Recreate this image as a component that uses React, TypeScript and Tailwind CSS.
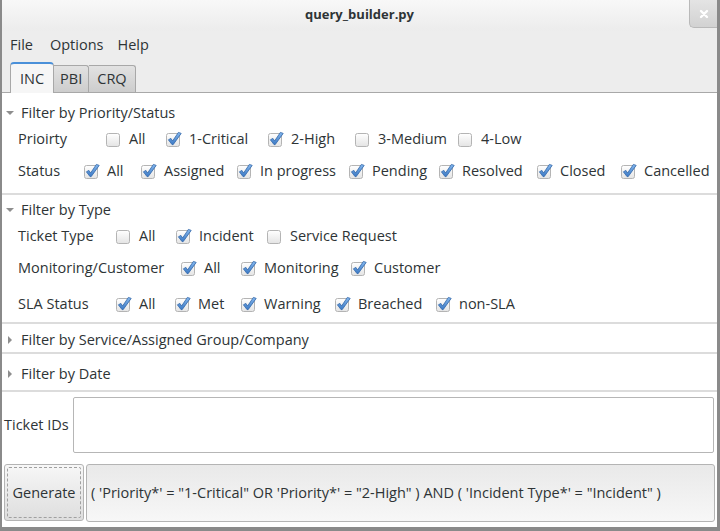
import React from 'react'

type Opt = { label: string; checked: boolean; w: string }

const font = { fontFamily: '"Open Sans", "DejaVu Sans", sans-serif' }

function CheckBox({ checked }: { checked: boolean }) {
  return (
    <svg width="17" height="16" viewBox="0 0 17 16" className="shrink-0">
      <defs>
        <linearGradient id="cbg" x1="0" y1="0" x2="0" y2="1">
          <stop offset="0" stopColor="#ffffff" />
          <stop offset="1" stopColor="#e4e4e4" />
        </linearGradient>
        <linearGradient id="chk" x1="0" y1="0" x2="0" y2="1">
          <stop offset="0" stopColor="#86b8ee" />
          <stop offset="1" stopColor="#3b79c4" />
        </linearGradient>
      </defs>
      <rect x="0.5" y="2.5" width="13" height="13" rx="2" fill="url(#cbg)" stroke="#b4b4b4" />
      {checked && (
        <path
          d="M2.4 8.8 L4.9 7.4 L6.6 10 L12.4 1.4 L15.2 2.4 L7.2 13.6 L6 13.6 Z"
          fill="url(#chk)"
          stroke="#2f64a8"
          strokeWidth="0.8"
          strokeLinejoin="round"
        />
      )}
    </svg>
  )
}

function Option({ o }: { o: Opt }) {
  return (
    <div className={`flex items-center gap-[6px] shrink-0 ${o.w}`}>
      <CheckBox checked={o.checked} />
      <span className="whitespace-nowrap">{o.label}</span>
    </div>
  )
}

function Row({ label, lw, h, opts }: { label: string; lw: string; h: string; opts: Opt[] }) {
  return (
    <div className={`flex items-center pl-[16px] shrink-0 ${h}`}>
      <div className={`shrink-0 whitespace-nowrap ${lw}`}>{label}</div>
      <div className="flex items-center">
        {opts.map((o) => (
          <Option key={o.label} o={o} />
        ))}
      </div>
    </div>
  )
}

function Header({ title, open, h }: { title: string; open: boolean; h: string }) {
  return (
    <div className={`flex items-center pl-[3px] shrink-0 ${h}`}>
      <span className="w-[16px] flex items-center">
        {open ? (
          <svg width="10" height="10" viewBox="0 0 10 10">
            <path d="M1 3 L9 3 L5 7 Z" fill="#8e8e8e" />
          </svg>
        ) : (
          <svg width="10" height="10" viewBox="0 0 10 10">
            <path d="M3 1 L7 5 L3 9 Z" fill="#8e8e8e" />
          </svg>
        )}
      </span>
      <span>{title}</span>
    </div>
  )
}

const Sep = () => <div className="h-[2px] bg-[#dcdcdc] shrink-0" />

export default function App() {
  const priority: Opt[] = [
    { label: 'All', checked: false, w: 'w-[60px]' },
    { label: '1-Critical', checked: true, w: 'w-[102px]' },
    { label: '2-High', checked: true, w: 'w-[87px]' },
    { label: '3-Medium', checked: false, w: 'w-[103px]' },
    { label: '4-Low', checked: false, w: 'w-[80px]' },
  ]
  const status: Opt[] = [
    { label: 'All', checked: true, w: 'w-[57px]' },
    { label: 'Assigned', checked: true, w: 'w-[96px]' },
    { label: 'In progress', checked: true, w: 'w-[112px]' },
    { label: 'Pending', checked: true, w: 'w-[90px]' },
    { label: 'Resolved', checked: true, w: 'w-[98px]' },
    { label: 'Closed', checked: true, w: 'w-[84px]' },
    { label: 'Cancelled', checked: true, w: 'w-[90px]' },
  ]
  const ticketType: Opt[] = [
    { label: 'All', checked: false, w: 'w-[60px]' },
    { label: 'Incident', checked: true, w: 'w-[91px]' },
    { label: 'Service Request', checked: false, w: 'w-[140px]' },
  ]
  const monitoring: Opt[] = [
    { label: 'All', checked: true, w: 'w-[60px]' },
    { label: 'Monitoring', checked: true, w: 'w-[110px]' },
    { label: 'Customer', checked: true, w: 'w-[100px]' },
  ]
  const sla: Opt[] = [
    { label: 'All', checked: true, w: 'w-[59px]' },
    { label: 'Met', checked: true, w: 'w-[66px]' },
    { label: 'Warning', checked: true, w: 'w-[94px]' },
    { label: 'Breached', checked: true, w: 'w-[101px]' },
    { label: 'non-SLA', checked: true, w: 'w-[90px]' },
  ]

  return (
    <div
      className="w-[720px] h-[531px] flex flex-col bg-[#ededed] text-[#2e3436] text-[14.5px] border-l-2 border-r-[3px] border-b-[4px] border-[#8a8a8a] overflow-hidden"
      style={font}
    >
      {/* Title bar */}
      <div className="relative h-[31px] shrink-0 flex items-center justify-center bg-gradient-to-b from-[#f8f8f8] to-[#ececec]">
        <span className="font-bold text-[13px] mt-[-1px]">query_builder.py</span>
        <div className="absolute right-0 top-0 w-[28px] h-[28px] rounded-bl-[5px] border-l border-b border-[#b9b9b9] bg-gradient-to-b from-[#e4e4e4] to-[#d2d2d2] flex items-center justify-center">
          <svg width="10" height="10" viewBox="0 0 10 10">
            <path d="M2 2 L8 8 M8 2 L2 8" stroke="#ffffff" strokeWidth="2.4" strokeLinecap="round" />
          </svg>
        </div>
      </div>

      {/* Menu bar */}
      <div className="h-[28px] shrink-0 flex items-center pl-[8px]">
        <span>File</span>
        <span className="ml-[17px]">Options</span>
        <span className="ml-[14px]">Help</span>
      </div>

      {/* Tabs */}
      <div className="h-[34px] shrink-0 flex items-end pl-[8px] border-b border-[#a8a8a8]">
        <div className="h-[31px] mb-[-1px] px-[9px] flex items-center bg-[#f6f6f6] border border-b-0 border-[#a8a8a8] border-t-[#4a90d9] border-t-2 rounded-t-[4px]">
          INC
        </div>
        <div className="h-[27px] px-[6px] flex items-center bg-gradient-to-b from-[#e2e2e2] to-[#cdcdcd] border border-b-0 border-l-0 border-[#a8a8a8] rounded-tr-[3px]">
          PBI
        </div>
        <div className="h-[27px] px-[8px] flex items-center bg-gradient-to-b from-[#e2e2e2] to-[#cdcdcd] border border-b-0 border-l-0 border-[#a8a8a8] rounded-tr-[3px]">
          CRQ
        </div>
      </div>

      {/* Content */}
      <div className="flex-1 flex flex-col bg-white">
        <div className="h-[6px] shrink-0" />
        <Header title="Filter by Priority/Status" open h="h-[26px] pt-[2px]" />
        <Row label="Prioirty" lw="w-[88px]" h="h-[28px]" opts={priority} />
        <Row label="Status" lw="w-[66px]" h="h-[36px]" opts={status} />
        <div className="h-[4px] shrink-0" />
        <Sep />

        <div className="h-[1px] shrink-0" />
        <Header title="Filter by Type" open h="h-[28px]" />
        <Row label="Ticket Type" lw="w-[98px]" h="h-[24px]" opts={ticketType} />
        <Row label="Monitoring/Customer" lw="w-[163px]" h="h-[40px]" opts={monitoring} />
        <Row label="SLA Status" lw="w-[98px]" h="h-[32px]" opts={sla} />
        <div className="h-[2px] shrink-0" />
        <Sep />

        <Header title="Filter by Service/Assigned Group/Company" open={false} h="h-[28px] pt-[4px]" />
        <Sep />
        <Header title="Filter by Date" open={false} h="h-[36px] pt-[4px]" />
        <Sep />

        <div className="h-[66px] shrink-0 flex items-center pl-[2px] pr-[3px] gap-[4px]">
          <span className="whitespace-nowrap">Ticket IDs</span>
          <div className="flex-1 h-[56px] border border-[#b6b6b6] rounded-[2px] bg-white" />
        </div>

        <div className="flex-1 flex items-start pt-[6px] pl-[2px] pr-[2px] gap-[2px]">
          <div className="w-[80px] h-[57px] shrink-0 rounded-[3px] border border-[#b4b4b4] bg-gradient-to-b from-[#f7f7f7] to-[#dedede] p-[2px]">
            <div className="w-full h-full border border-dashed border-[#a0a0a0] rounded-[2px] flex items-center justify-center">
              Generate
            </div>
          </div>
          <div className="flex-1 h-[58px] rounded-[3px] border border-[#b4b4b4] bg-gradient-to-b from-[#e9e9e9] to-[#f7f7f7] flex items-center pl-[4px] whitespace-nowrap overflow-hidden">
            ( 'Priority*' = "1-Critical" OR 'Priority*' = "2-High" ) AND ( 'Incident Type*' = "Incident" )
          </div>
        </div>
      </div>
    </div>
  )
}
